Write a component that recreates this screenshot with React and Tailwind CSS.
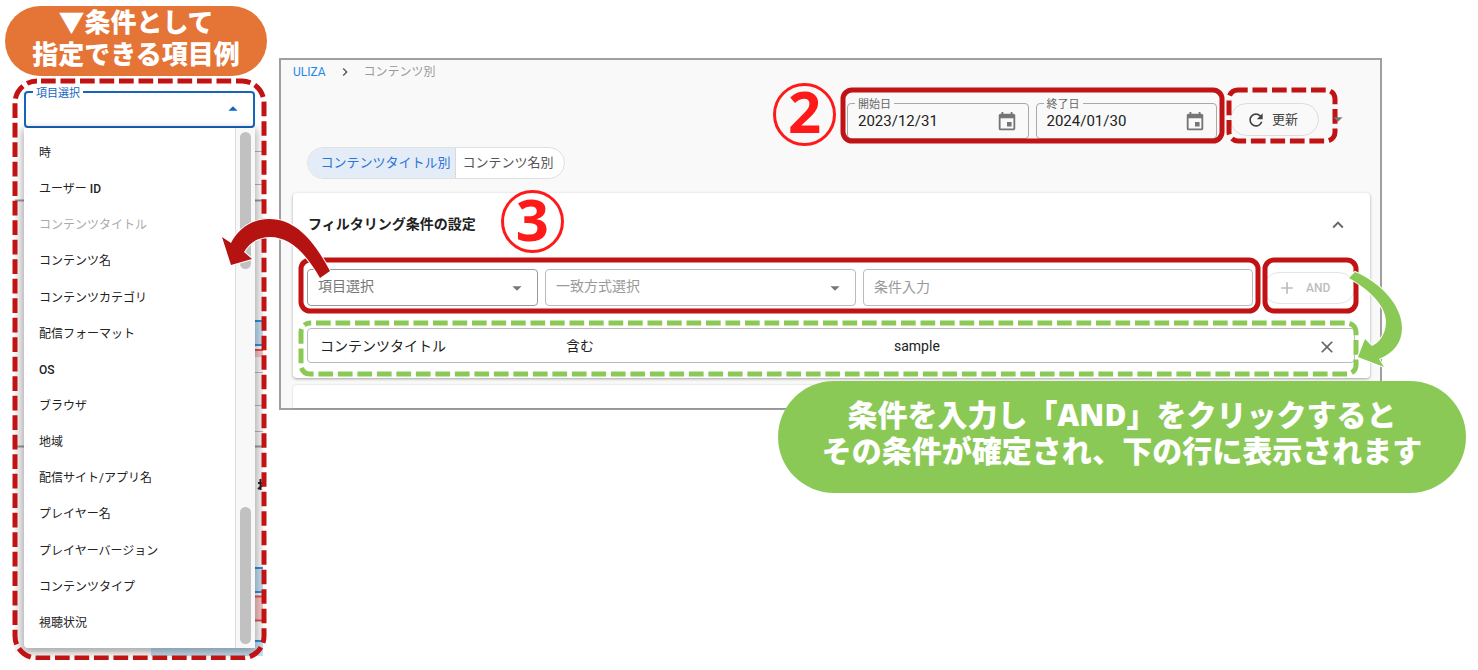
import { MdRefresh, MdAdd, MdClose, MdEvent, MdArrowDropDown, MdArrowDropUp, MdExpandLess, MdChevronRight } from "react-icons/md";

const FIELDS = [
  "時",
  "ユーザー ID",
  "コンテンツタイトル",
  "コンテンツ名",
  "コンテンツカテゴリ",
  "配信フォーマット",
  "OS",
  "ブラウザ",
  "地域",
  "配信サイト/アプリ名",
  "プレイヤー名",
  "プレイヤーバージョン",
  "コンテンツタイプ",
  "視聴状況",
];

function Outline({ color, dashed = false, radius = 9, offset = 0 }) {
  return (
    <span className="pointer-events-none absolute inset-[2px] z-10">
      <svg className="block h-full w-full overflow-visible" aria-hidden="true">
        <rect
          width="100%"
          height="100%"
          rx={radius}
          fill="none"
          stroke={color}
          strokeWidth="5"
          strokeDasharray={dashed ? "14.700 4.800" : undefined}
          strokeDashoffset={offset}
        />
      </svg>
    </span>
  );
}

function StepNumber({ children }) {
  return (
    <span className="flex size-[63px] shrink-0 items-center justify-center rounded-full border-[3px] border-[#ff1a1a] pb-[6px] font-['Open_Sans',sans-serif] text-[58px] leading-none font-bold text-[#ff1a1a]">
      {children}
    </span>
  );
}

function DateField({ id, label, value }) {
  return (
    <fieldset className="min-w-0 flex-1 rounded border border-[#a8a8a8] pr-[10px] pl-[7px]">
      <legend className="px-[3px] pt-[3px] text-[11px] leading-[9px] text-[#666]">
        <label htmlFor={id}>{label}</label>
      </legend>
      <div className="flex h-[29px] items-start pl-[3px]">
        <input id={id} defaultValue={value} className="h-6 min-w-0 flex-1 bg-transparent text-[15px] text-[#222] outline-none" />
        <button aria-label={`${label}を選択`} className="pt-[2px] text-[#757575]">
          <MdEvent size={22} />
        </button>
      </div>
    </fieldset>
  );
}

function FilterSelect({ label, width, tone }) {
  return (
    <div className={`relative ${width}`}>
      <select aria-label={label} className={`block h-[37px] w-full appearance-none rounded border bg-white px-[10px] pb-[2px] text-[14px] outline-none ${tone}`}>
        <option>{label}</option>
      </select>
      <MdArrowDropDown size={22} className="pointer-events-none absolute top-2 right-[10px] text-[#777]" />
    </div>
  );
}

function ChartEdge() {
  return (
    <svg className="absolute top-0 left-[2px] h-full w-[248px]" viewBox="0 0 248 581" preserveAspectRatio="none" aria-hidden="true">
      <rect x="0" y="123" width="248" height="450" fill="#f5f5f5" />
      <g stroke="#b5b5b5">
        <path d="M236 72.500H248M236 105.500H248M236 293.500H248M236 326.500H248M236 352.500H248" />
        <path d="M0 121.500H248M0 367.500H248" stroke="#999" strokeWidth="2" />
      </g>
      <path d="M243 404H248M245.500 400V411M248 406L243 410" stroke="#222" strokeWidth="2" />
      <rect x="236" y="242" width="12" height="24" fill="#bfdcef" />
      <path d="M236 242H248M236 266H248" stroke="#2b8fdc" strokeWidth="2" />
      <rect x="236" y="270" width="12" height="8" fill="#f4c2c2" />
      <path d="M236 271H248" stroke="#e05252" strokeWidth="2" />
      <rect x="236" y="489" width="12" height="24" fill="#bfdcef" />
      <path d="M236 489H248M236 513H248" stroke="#2b8fdc" strokeWidth="2" />
      <rect x="236" y="517" width="12" height="25" fill="#f4c2c2" />
      <path d="M236 517.500H248M236 541.500H248" stroke="#e05252" strokeWidth="2" />
      <rect x="136" y="562" width="112" height="15" fill="#c3dff2" />
      <path d="M236 562H248" stroke="#2b8fdc" strokeWidth="2" />
    </svg>
  );
}

function FieldPicker() {
  return (
    <aside className="flex w-[267px] shrink-0 flex-col pt-[6px] pl-[5px]">
      <h2 className="flex h-[70px] flex-col justify-center rounded-full bg-[#e57537] pb-1 text-center text-[26px] leading-[32px] font-black text-white">
        <span>▼条件として</span>
        <span>指定できる項目例</span>
      </h2>
      <div className="relative mt-[3px] ml-2 h-[581px] w-[253px]">
        <ChartEdge />
        <div className="relative flex h-full flex-col px-[11px] pt-[7px] pb-3">
          <fieldset className="h-[42px] w-[231px] rounded border-2 border-[#1565c0] bg-white">
            <legend className="ml-[7px] px-[3px] pt-[3px] text-[11px] leading-[9px] text-[#1565c0]">項目選択</legend>
            <button aria-label="項目選択を閉じる" className="ml-auto flex pr-[9px] text-[#1565c0]">
              <MdArrowDropUp size={22} />
            </button>
          </fieldset>
          <div className="flex w-[231px] flex-1 rounded-b bg-white shadow-[0_3px_8px_2px_rgba(0,0,0,0.3)]">
            <ul role="listbox" aria-label="項目選択" className="flex flex-1 flex-col justify-between pt-[7px] pb-[7px] pl-[15px] text-[12px] text-[#222]">
              {FIELDS.map((name) => (
                <li
                  key={name}
                  role="option"
                  aria-selected="false"
                  className={`flex h-9 items-center ${name === "コンテンツタイトル" ? "text-[#aaa]" : ""} ${name === "OS" ? "font-medium" : ""}`}
                >
                  {name === "ユーザー ID" ? (
                    <span>ユーザー <span className="font-medium">ID</span></span>
                  ) : (
                    name
                  )}
                </li>
              ))}
            </ul>
            <div className="flex w-5 flex-col justify-between border-l border-[#ddd] bg-[#f8f8f8] px-1 pt-1 pb-1">
              <span className="h-[137px] w-[11px] rounded-full bg-[#c1c1c1]" />
              <span className="h-[137px] w-[11px] rounded-full bg-[#c1c1c1]" />
            </div>
          </div>
        </div>
        <Outline color="#c11313" dashed radius={22} offset={-4} />
      </div>
    </aside>
  );
}

function Toolbar() {
  return (
    <div className="mt-[6px] flex h-[55px] items-center justify-end pr-[43px]">
      <div className="pb-[3px]">
        <StepNumber>2</StepNumber>
      </div>
      <div className="relative ml-[5px] flex h-[55px] w-[383px] items-start gap-[7px] pt-[9px] pr-[7px] pl-[6px]">
        <DateField id="start" label="開始日" value="2023/12/31" />
        <DateField id="end" label="終了日" value="2024/01/30" />
        <Outline color="#c11313" />
      </div>
      <div className="relative ml-[3px] h-[55px] w-[110px] pt-[15px] pl-[3px]">
        <button className="flex h-[33px] w-[89px] items-center gap-[6px] rounded-full border border-[#ddd] pl-[15px] text-[13px] text-[#444]">
          <MdRefresh size={20} />
          更新
        </button>
        <Outline color="#c11313" dashed offset={5} />
        <button aria-label="更新メニュー" className="absolute top-5 -right-3 z-20 text-[#777]">
          <MdArrowDropDown size={22} />
        </button>
      </div>
    </div>
  );
}

function FilterCard() {
  return (
    <section className="relative mr-[10px] ml-3 mt-[14px] rounded bg-white pr-3 pb-[2px] pl-[6px] shadow-[0_1px_3px_rgba(0,0,0,0.35)]">
      <header className="flex h-[65px] items-center pr-[9px] pb-[2px] pl-[9px]">
        <h1 className="mr-[25px] text-[14px] font-bold text-[#222]">フィルタリング条件の設定</h1>
        <div className="-my-2 pb-[6px]">
          <StepNumber>3</StepNumber>
        </div>
        <button aria-label="折りたたむ" className="ml-auto text-[#666]">
          <MdExpandLess size={22} />
        </button>
      </header>

      <div className="flex gap-[3px]">
        <div className="relative flex h-[55px] flex-1 gap-[7px] pt-[11px] pr-[7px] pl-2">
          <FilterSelect label="項目選択" width="w-[231px]" tone="border-[#999] text-[#777]" />
          <FilterSelect label="一致方式選択" width="w-[311px]" tone="border-[#bbb] text-[#9a9a9a]" />
          <input
            aria-label="条件入力"
            placeholder="条件入力"
            className="h-[37px] min-w-0 flex-1 rounded border border-[#bbb] px-[10px] pb-[2px] text-[14px] outline-none placeholder:text-[#9a9a9a]"
          />
          <Outline color="#c11313" />
        </div>
        <div className="relative h-[55px] w-[95px] pt-[14px]">
          <button className="flex h-8 w-[92px] items-center gap-[9px] rounded-full border border-[#e4e4e4] pl-[13px] text-[12px] font-medium text-[#bdbdbd]">
            <MdAdd size={20} />
            AND
          </button>
          <Outline color="#c11313" />
        </div>
      </div>

      <div className="relative mt-2 h-[55px] pt-[7px] pr-[3px] pl-2">
        <div className="flex h-[35px] items-center rounded border border-[#bbb] pt-[2px] pr-[17px] pl-3 text-[14px] text-[#222]">
          <span className="w-[246px]">コンテンツタイトル</span>
          <span className="w-[328px]">含む</span>
          <span>sample</span>
          <button aria-label="条件を削除" className="ml-auto text-[#666]">
            <MdClose size={20} />
          </button>
        </div>
        <Outline color="#8bc957" dashed offset={-6} />
      </div>

      <svg className="absolute top-[70px] -right-[38px] z-20 h-[110px] w-[64px]" viewBox="1344 263 64 110" aria-hidden="true">
        <path
          d="M1355 272L1349 278C1370 290 1386 306 1386 322C1386 334 1379 343 1372 346L1365 339L1358 357L1384 367L1379 359C1394 353 1402 342 1402 328C1402 304 1378 281 1355 272Z"
          fill="#8bc957"
          stroke="white"
          strokeWidth="2"
          paintOrder="stroke"
        />
      </svg>
    </section>
  );
}

export default function App() {
  return (
    <div className="flex items-start gap-3 bg-white font-[Roboto,'Noto_Sans_CJK_JP',sans-serif]">
      <FieldPicker />
      <main className="flex min-w-0 flex-1 flex-col pt-[58px] pr-3">
        <div className="relative mr-[84px] border-2 border-[#a09ea0] bg-[#f9f9f9]">
          <nav aria-label="パンくず" className="flex h-[22px] items-center pt-[2px] pl-3 text-[12px]">
            <a href="#uliza" className="text-[#1e88e5]">ULIZA</a>
            <MdChevronRight size={16} className="mx-[11px] text-[#555]" />
            <span className="text-[#999]">コンテンツ別</span>
          </nav>
          <Toolbar />
          <div className="mt-1 ml-[26px] flex h-8 w-[258px] overflow-hidden rounded-full border border-[#e0e0e0] bg-white text-[13px]">
            <button className="flex-1 border-r border-[#d5dbe3] bg-[#e4ecf7] pl-2 whitespace-nowrap text-[#2a75d6]">コンテンツタイトル別</button>
            <button className="w-[108px] pr-1 whitespace-nowrap text-[#555]">コンテンツ名別</button>
          </div>
          <FilterCard />
          <div className="mt-[7px] mr-[10px] ml-3 h-[23px] rounded-t bg-white shadow-[0_0_2px_rgba(0,0,0,0.2)]" />

          <svg className="absolute top-[152px] -left-[66px] z-20 h-[76px] w-[124px]" viewBox="215 212 124 76" aria-hidden="true">
            <path
              d="M330 271L320 278C308 257 292 237 270 237C258 237 249 243 244 252L252 259L231 265L222 237L231 243C238 229 252 219 269 219C297 219 315 243 330 271Z"
              fill="#b51212"
              stroke="white"
              strokeWidth="2"
              paintOrder="stroke"
            />
          </svg>
        </div>
        <p className="relative z-10 -mt-[29px] flex h-[112px] w-[688px] flex-col self-end rounded-full bg-[#8bc957] pt-4 text-center font-['Open_Sans','Noto_Sans_CJK_JP',sans-serif] text-[30px] leading-[36px] font-black text-white">
          <span>条件を入力し「AND」をクリックすると</span>
          <span>その条件が確定され、下の行に表示されます</span>
        </p>
      </main>
    </div>
  );
}
